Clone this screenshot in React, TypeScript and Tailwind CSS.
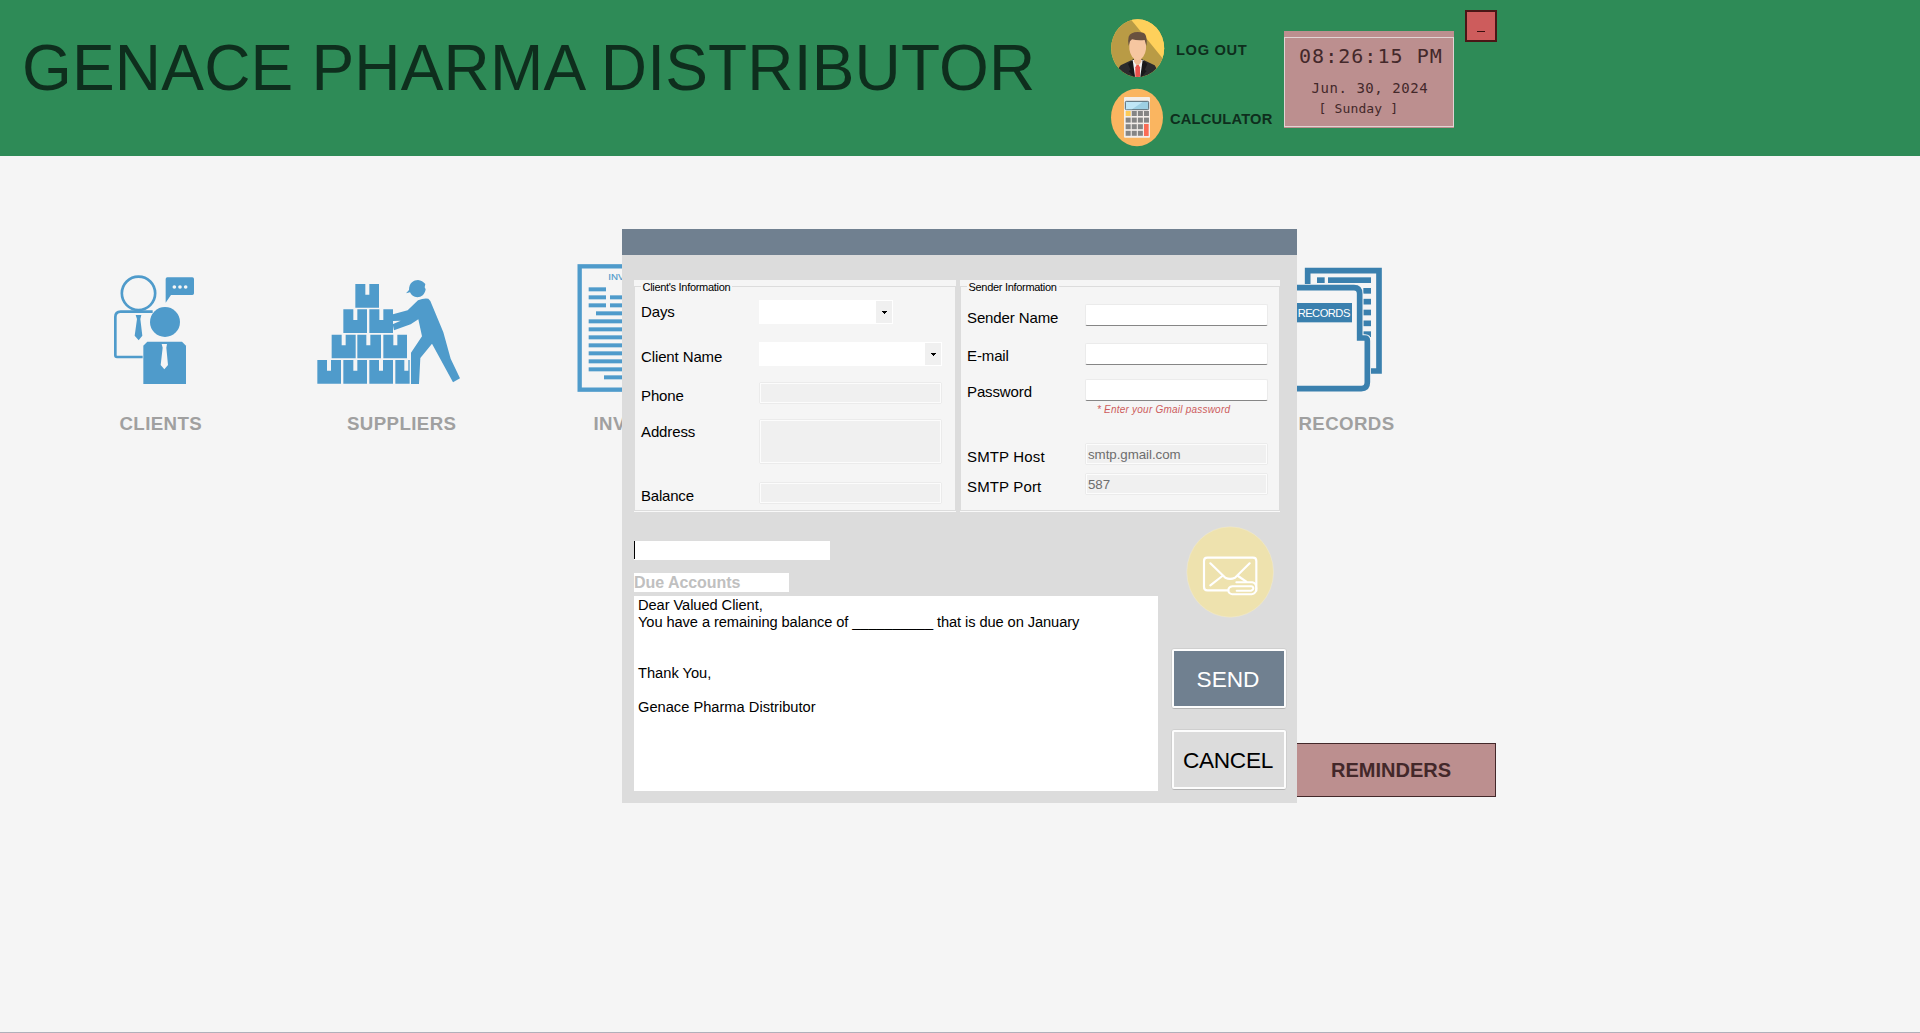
import type { ReactNode } from "react";

const BLUE = "#4f9bcb";
const STEEL = "#3a80ae";

function AvatarIcon() {
  return (
    <svg className="h-16 w-[60px]" viewBox="15 18 180 192">
      <defs>
        <clipPath id="avatar">
          <ellipse cx="113" cy="114.500" rx="79.5" ry="86.500" />
        </clipPath>
      </defs>
      <g clipPath="url(#avatar)">
        <rect x="30" y="20" width="170" height="190" fill="#fed05b" />
        <path d="M30 20H88L180 125 200 155V210H30Z" fill="#b99b45" />
        <path d="M94 30 196 155V20H90Z" fill="#fed05b" />
        <path d="M30 210 62 166 100 148H126L164 166 190 210Z" fill="#2b2b2d" />
        <path d="M95 150H131L122 205H104Z" fill="#f1f1f1" />
        <path d="M102 130H124V155L113 170 102 155Z" fill="#f0bd97" />
        <path d="M106 172 110 165H116L120 172 120 205H106Z" fill="#e9524c" />
        <path d="M98 150 84 162 92 180 86 183 106 206ZM128 150 142 162 134 180 140 183 120 206Z" fill="#18181a" />
        <path d="M88 98Q87 73 113 73T138 98V118Q134 146 113 151 92 146 88 118Z" fill="#f6c6a0" />
        <path d="M86 108Q83 90 86 80 92 66 113 66T137 76Q142 88 139 108L134 90Q112 92 96 88L90 94Z" fill="#68513f" />
      </g>
    </svg>
  );
}

function CalculatorIcon() {
  const keys: ReactNode[] = [];
  for (let r = 0; r < 4; r++) {
    for (let c = 0; c < 4; c++) {
      if (c === 3 && r > 1) continue;
      keys.push(
        <rect
          key={`${r}-${c}`}
          x={77 + c * 18.3}
          y={303 + r * 19.8}
          width="15"
          height="15"
          fill={r === 0 && c === 0 ? "#fccb58" : "#858585"}
        />,
      );
    }
  }
  return (
    <svg className="h-16 w-[60px]" viewBox="15 228 180 192">
      <ellipse cx="111" cy="322.5" rx="78" ry="86" fill="#fab560" />
      <rect x="72" y="261" width="78" height="122" rx="3" fill="#f3eeea" />
      <rect x="76" y="274" width="70" height="25" rx="3" fill="#9dcfe3" stroke="#596a73" strokeWidth="3" />
      <path d="M78 276H128L96 298H78Z" fill="#bfe6f6" />
      {keys}
      <rect x="132" y="342" width="14" height="36" fill="#fa6c56" />
    </svg>
  );
}

function ClientsIcon() {
  return (
    <svg className="h-[150px] w-36" viewBox="0 18 432 450" fill={BLUE}>
      <circle cx="145.500" cy="130" r="50" fill="none" stroke={BLUE} strokeWidth="8" />
      <path d="M188 185H92Q76 185 76 201V316Q76 321 81 321H158" fill="none" stroke={BLUE} strokeWidth="8" />
      <path d="M137 195H154L151 207 157 257 146 271 134 257 141 207Z" />
      <path d="M232 82H307Q312 82 312 87V130Q312 135 307 135H243L227 158V87Q227 82 232 82Z" />
      <circle cx="253" cy="111" r="5.500" fill="#f5f5f5" />
      <circle cx="270" cy="111" r="5.500" fill="#f5f5f5" />
      <circle cx="287" cy="111" r="5.500" fill="#f5f5f5" />
      <circle cx="225" cy="216" r="45" />
      <path d="M172 275H276L288 287V402H160V287Z" />
      <path d="M215 282H231L229 293 234 345 223 358 212 345 218 293Z" fill="#f5f5f5" />
    </svg>
  );
}

const BOXES: [number, number, number, number][] = [
  [136, 42, 71, 30],
  [100, 118, 71, 30],
  [178, 118, 71, 30],
  [65, 194, 72, 30],
  [142, 194, 71, 27],
  [220, 194, 71, 30],
  [22, 270, 71, 29],
  [100, 270, 71, 30],
  [178, 270, 71, 29],
  [256, 270, 43, 27],
];

function SuppliersIcon() {
  return (
    <svg className="h-[150px] w-[184px]" viewBox="0 -42 552 450" fill={BLUE}>
      {BOXES.map(([x, y, w, n]) => (
        <path key={`${x}-${y}`} d={`M${x} ${y}h${n}v32h12v-32H${x + w}V${y + 71}H${x}Z`} />
      ))}
      <path d="M297 60C297 38 312 30 324 30C333 31 340 36 346 42L344 52 347 58C345 73 334 82 322 82C311 82 304 75 300 67L288 70Z" />
      <path d="M249 133 293 121 324 91Q342 83 355 86L361 93 400 187 422 266 450 325 429 337 366 221 331 264 327 342H303V248L336 199 325 148 302 163 252 181 248 163 272 152 249 153Z" />
    </svg>
  );
}

const INVOICE_LINES: [number, number, number][] = [
  [86, 202, 52],
  [86, 226, 52],
  [150, 226, 120],
  [86, 250, 52],
  [150, 250, 120],
  [108, 274, 170],
  [86, 298, 190],
  [86, 322, 190],
  [86, 346, 190],
  [86, 370, 190],
  [86, 394, 190],
  [86, 418, 190],
  [86, 442, 190],
  [132, 466, 140],
];

function InvoiceIcon() {
  return (
    <svg className="h-[150px] w-[130px]" viewBox="30 108 390 450" fill={BLUE}>
      <rect x="59" y="139" width="260" height="370" fill="none" stroke={BLUE} strokeWidth="13" />
      <text x="145" y="181" fontSize="29" fontFamily="Liberation Sans, sans-serif" stroke={BLUE} strokeWidth="0.5">
        INV
      </text>
      {INVOICE_LINES.map(([x, y, w]) => (
        <rect key={`${x}-${y}`} x={x} y={y} width={w} height="12" />
      ))}
    </svg>
  );
}

function RecordsIcon() {
  return (
    <svg className="h-[150px] w-[130px]" viewBox="0 3 390 450" fill={STEEL}>
      <path d="M83 92V47H297V348H262" fill="none" stroke={STEEL} strokeWidth="17" />
      <rect x="111" y="67" width="23" height="17" />
      <rect x="144" y="67" width="129" height="17" />
      {[99, 131.500, 164, 196.500, 229].map((y) => (
        <rect key={y} x="250" y={y} width="23" height="17" />
      ))}
      <path
        d="M20 98H222Q239 98 239 116V249H255Q262 249 262 257V382Q262 401 244 401H20"
        fill="#f5f5f5"
        stroke="#f5f5f5"
        strokeWidth="22"
      />
      <path
        d="M20 98H222Q239 98 239 116V249H255Q262 249 262 257V382Q262 401 244 401H20"
        fill="none"
        stroke={STEEL}
        strokeWidth="17"
      />
      <rect x="20" y="144" width="196" height="58" />
      <text x="53" y="186" fontSize="33.500" textLength="158" fill="#fff" fontFamily="Liberation Sans, sans-serif">
        RECORDS
      </text>
    </svg>
  );
}

function MailIcon() {
  return (
    <svg className="h-24 w-[90px]" viewBox="106 40 270 288">
      <ellipse cx="241.500" cy="184" rx="130" ry="135.500" fill="#eee2ae" stroke="#f0ead2" strokeWidth="1.500" />
      <g fill="none" stroke="#fff" strokeWidth="6.500" strokeLinecap="round" strokeLinejoin="round">
        <path d="M236 239H173Q163 239 163 229V151Q163 141 173 141H310Q320 141 320 151V240" />
        <path d="M182 158 227 201Q241 208 256 201L300 158" />
        <path d="M218 196 182 224M265 196 290 213" />
        <path
          d="M260 215H308Q320 217 320 233T306 251H248Q236 249 236 239T248 227H304Q311 228 311 233T304 240H261"
          strokeWidth="6"
        />
      </g>
    </svg>
  );
}

function MenuItem({ icon, label, className }: { icon: ReactNode; label: string; className: string }) {
  return (
    <button className={`flex shrink-0 flex-col text-left ${className}`}>
      {icon}
      <span className="mt-[5.5px] text-[18.67px] leading-6 font-bold tracking-[0.4px] text-[#a0a0a0]">{label}</span>
    </button>
  );
}

function Group({ title, className, children }: { title: string; className: string; children: ReactNode }) {
  return (
    <section className={`relative h-[232px] border-b border-[#f8f8f8] bg-[#f5f5f5] pt-1.5 ${className}`}>
      <div className="h-[225px] border border-[#dcdcdc]" />
      <h2 className="absolute top-0 left-[6.5px] bg-[#f5f5f5] px-0.5 text-[11px] leading-[14px] tracking-[-0.3px] whitespace-nowrap text-black">
        {title}
      </h2>
      <div className="absolute inset-0 flex">{children}</div>
    </section>
  );
}

function Label({ children, className }: { children: ReactNode; className: string }) {
  return <label className={`block h-5 text-[15px] leading-5 whitespace-nowrap text-black ${className}`}>{children}</label>;
}

function Combo({ className }: { className: string }) {
  return (
    <div className={`flex h-6 justify-end bg-white p-px ${className}`}>
      <div className="flex w-4 items-center justify-center bg-[#f0f0f0]">
        <svg className="h-[3px] w-[5px]" viewBox="0 0 5 3" shapeRendering="crispEdges">
          <path d="M0 0H5V1H4V2H3V3H2V2H1V1H0Z" />
        </svg>
      </div>
    </div>
  );
}

function ReadOnly({ children, className }: { children?: ReactNode; className: string }) {
  return (
    <div className={`w-[183px] rounded-[2px] border border-[#ebebeb] ${className}`}>
      <div className="h-full border border-[#fcfcfc] bg-[#f0f0f0] pl-px text-[13.33px] leading-5 tracking-[-0.05px] text-[#6d6d6d]">
        {children}
      </div>
    </div>
  );
}

function TextField({ className }: { className: string }) {
  return (
    <div className={`h-[22px] w-[183px] rounded-[2px] border border-[#ebebeb] border-b-[#868686] bg-white ${className}`} />
  );
}

function DialogButton({ children, className }: { children: ReactNode; className: string }) {
  return (
    <div className="h-[61px] rounded-[4px] border border-[#cfcfcf] border-b-[#b4b4b4]">
      <button
        className={`block h-[59px] w-full rounded-[2px] border-2 border-[#fdfdfd] pr-[2px] text-center text-[22.67px] leading-[56px] ${className}`}
      >
        {children}
      </button>
    </div>
  );
}

function EmailDialog() {
  return (
    <div className="absolute top-[229px] left-[622px] h-[574px] w-[675px] bg-[#dcdcdc]">
      <div className="h-[26px] bg-[#708090]" />
      <div className="mt-[25px] ml-3 flex gap-1">
        <Group title="Client's Information" className="w-[322px]">
          <div className="w-[125px] shrink-0 pl-[7px] tracking-[-0.12px]">
            <Label className="mt-[22px]">Days</Label>
            <Label className="mt-[25px]">Client Name</Label>
            <Label className="mt-[19px]">Phone</Label>
            <Label className="mt-4">Address</Label>
            <Label className="mt-11 tracking-[-0.2px]">Balance</Label>
          </div>
          <div>
            <Combo className="mt-5 w-[134px]" />
            <Combo className="mt-[18px] w-[183px]" />
            <ReadOnly className="mt-4 h-[22px]" />
            <ReadOnly className="mt-[15px] h-[45px]" />
            <ReadOnly className="mt-[18px] h-[22px]" />
          </div>
        </Group>
        <Group title="Sender Information" className="w-[320px]">
          <div className="w-[125px] shrink-0 pl-[7px] tracking-[-0.12px]">
            <Label className="mt-7">Sender Name</Label>
            <Label className="mt-[18px]">E-mail</Label>
            <Label className="mt-4">Password</Label>
            <Label className="mt-[45px] tracking-[0.15px]">SMTP Host</Label>
            <Label className="mt-2.5 tracking-[0.15px]">SMTP Port</Label>
          </div>
          <div>
            <TextField className="mt-6" />
            <TextField className="mt-[17px]" />
            <TextField className="mt-3.5" />
            <p className="mt-[3px] h-3 pl-3 text-[10px] leading-3 tracking-[0.22px] whitespace-nowrap text-[#cd5c5c] italic">
              * Enter your Gmail password
            </p>
            <ReadOnly className="mt-[27px] h-[22px]">smtp.gmail.com</ReadOnly>
            <ReadOnly className="mt-2 h-[22px]">587</ReadOnly>
          </div>
        </Group>
      </div>
      <div className="ml-3 flex">
        <div className="w-[524px]">
          <div className="mt-[29px] h-[19px] w-[196px] bg-white">
            <div className="h-[18px] w-px bg-black" />
          </div>
          <div className="mt-[13px] h-[19px] w-[155px] bg-white text-base leading-[19px] font-bold tracking-[-0.05px] text-[#c0c0c0]">
            Due Accounts
          </div>
          <div className="mt-1 h-[195px] bg-white pt-px pl-1 text-[14.67px] leading-[17px] whitespace-pre text-black">
            <p className="tracking-[-0.07px]">Dear Valued Client,</p>
            <p className="tracking-[-0.085px]">You have a remaining balance of __________ that is due on January</p>
            <p>{"\n\nThank You,\n\nGenace Pharma Distributor"}</p>
          </div>
        </div>
        <div className="ml-[13px] w-[116px]">
          <div className="mt-3 pl-[14.33px]">
            <MailIcon />
          </div>
          <div className="mt-7 flex flex-col gap-5">
            <DialogButton className="bg-[#708090] text-white">SEND</DialogButton>
            <DialogButton className="bg-[#dcdcdc] tracking-[-0.3px] text-black">CANCEL</DialogButton>
          </div>
        </div>
      </div>
    </div>
  );
}

export default function App() {
  return (
    <div className="relative flex h-[1033px] w-[1920px] flex-col overflow-hidden border-b border-[#b0b0ba] bg-[#f5f5f5] font-['Liberation_Sans',Arial,sans-serif]">
      <header className="flex h-[156px] shrink-0 items-start bg-[#2e8b57] pl-[22px] text-[#0e2e1d]">
        <h1 className="mt-8 w-[1083px] shrink-0 text-[64px] leading-[72px] tracking-[0.19px] whitespace-nowrap">
          GENACE PHARMA DISTRIBUTOR
        </h1>
        <div className="mt-4 flex w-[179px] shrink-0 flex-col gap-1.5 text-[14.67px] leading-4 font-bold">
          <button className="flex items-center">
            <AvatarIcon />
            <span className="mt-1 ml-[11px] tracking-[0.65px] whitespace-nowrap">LOG OUT</span>
          </button>
          <button className="flex items-center">
            <CalculatorIcon />
            <span className="mt-0.5 ml-[5px] tracking-[0.2px] whitespace-nowrap">CALCULATOR</span>
          </button>
        </div>
        <div className="mt-[31px] h-[97px] w-[170px] shrink-0 bg-[#bc8f8f] pt-1.5 pb-px font-['DejaVu_Sans_Mono',monospace] whitespace-pre text-[#43282a]">
          <div className="h-[90px] border border-[#e2d4d4]">
            <p className="mt-1 pl-3.5 text-[20px] leading-7 tracking-[1.03px]">08:26:15 PM</p>
            <p className="mt-2 pl-[26.5px] text-[14px] leading-5 tracking-[0.55px]">Jun. 30, 2024</p>
            <p className="mt-px pl-[33.5px] text-[13px] leading-5 tracking-[0.15px]">[ Sunday ]</p>
          </div>
        </div>
        <button className="mt-2.5 ml-[11px] flex h-8 w-8 shrink-0 justify-center border-2 border-[#4a1616] bg-[#cd5c5c] pt-[19px]">
          <span className="h-px w-2 bg-[#3a1010]" />
        </button>
      </header>
      <main className="flex-1">
        <nav className="flex pt-[100px] pl-[90px]">
          <MenuItem className="w-36 [&>span]:pl-[29.5px]" icon={<ClientsIcon />} label="CLIENTS" />
          <MenuItem className="ml-[76px] w-[184px] [&>span]:pl-[37px]" icon={<SuppliersIcon />} label="SUPPLIERS" />
          <MenuItem className="ml-[76px] w-[130px] [&>span]:pl-[23.5px]" icon={<InvoiceIcon />} label="INV" />
          <MenuItem className="ml-[580px] w-[130px] [&>span]:pl-[18.5px]" icon={<RecordsIcon />} label="RECORDS" />
        </nav>
        <button className="mt-[307.5px] ml-[1276px] block h-[54px] w-[220px] border border-[#43282a] bg-[#bc8f8f] pl-[54px] text-left text-xl leading-[52px] font-bold text-[#43282a]">
          REMINDERS
        </button>
      </main>
      <EmailDialog />
    </div>
  );
}
